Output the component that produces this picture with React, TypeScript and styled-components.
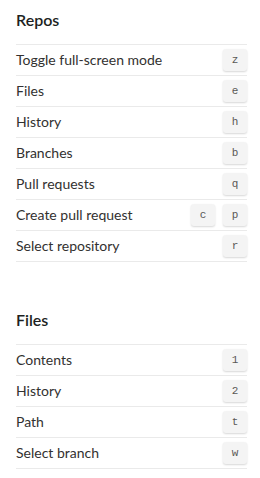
import React from 'react'
import styled, { createGlobalStyle } from 'styled-components'

interface Shortcut {
  label: string
  keys: string[]
}

interface Group {
  title: string
  items: Shortcut[]
}

const groups: Group[] = [
  {
    title: 'Repos',
    items: [
      { label: 'Toggle full-screen mode', keys: ['z'] },
      { label: 'Files', keys: ['e'] },
      { label: 'History', keys: ['h'] },
      { label: 'Branches', keys: ['b'] },
      { label: 'Pull requests', keys: ['q'] },
      { label: 'Create pull request', keys: ['c', 'p'] },
      { label: 'Select repository', keys: ['r'] },
    ],
  },
  {
    title: 'Files',
    items: [
      { label: 'Contents', keys: ['1'] },
      { label: 'History', keys: ['2'] },
      { label: 'Path', keys: ['t'] },
      { label: 'Select branch', keys: ['w'] },
    ],
  },
]

const GlobalStyle = createGlobalStyle`
  body {
    margin: 0;
    background: #ffffff;
    font-family: Lato, 'Noto Sans', sans-serif;
    color: #323130;
  }
`

export default function App() {
  return (
    <>
      <GlobalStyle />
      <Panel>
        {groups.map((group) => (
          <Section key={group.title}>
            <Title>{group.title}</Title>
            <List>
              {group.items.map((item) => (
                <Row key={item.label}>
                  <Label>{item.label}</Label>
                  <Keys>
                    {item.keys.map((k) => (
                      <Key key={k}>{k}</Key>
                    ))}
                  </Keys>
                </Row>
              ))}
            </List>
          </Section>
        ))}
      </Panel>
    </>
  )
}

const Panel = styled.div`
  width: 260px;
  box-sizing: border-box;
  padding: 0 13px 0 16px;
`

const Section = styled.section`
  & + & {
    margin-top: 38px;
  }
`

const Title = styled.h2`
  margin: 0;
  padding-top: 10px;
  height: 44px;
  box-sizing: border-box;
  font-size: 16px;
  line-height: 20px;
  font-weight: 600;
  color: #201f1e;
`

const List = styled.div`
  border-bottom: 1px solid #eaeaea;
`

const Row = styled.div`
  display: flex;
  align-items: center;
  justify-content: space-between;
  height: 31px;
  box-sizing: border-box;
  border-top: 1px solid #eaeaea;
`

const Label = styled.span`
  font-size: 14px;
  line-height: 20px;
`

const Keys = styled.div`
  display: flex;
  gap: 8px;
`

const Key = styled.kbd`
  display: flex;
  align-items: center;
  justify-content: center;
  width: 24px;
  height: 22px;
  border-radius: 3px;
  background: #f4f4f4;
  box-shadow: 0 1px 2px rgba(0, 0, 0, 0.16);
  font-family: 'Liberation Mono', monospace;
  font-size: 11px;
  color: #5a5856;
`
